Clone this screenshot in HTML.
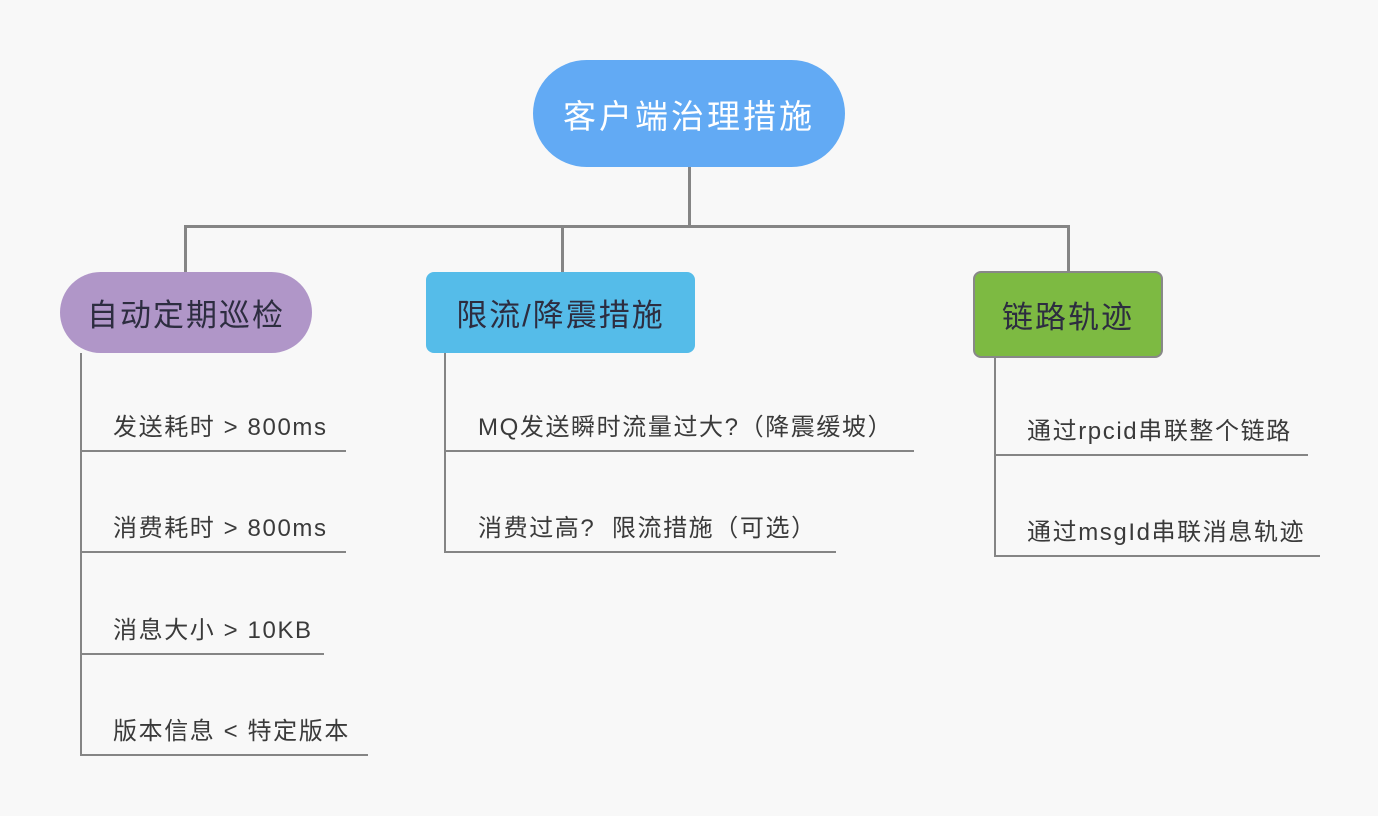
<!DOCTYPE html>
<html><head><meta charset="utf-8"><style>
body{margin:0;width:1378px;height:816px;background:#f8f8f8;position:relative;overflow:hidden;font-family:"Liberation Sans","Noto Sans CJK SC",sans-serif}
div{position:absolute;box-sizing:border-box}
.l{background:#858585}
.n{display:flex;align-items:center;justify-content:center;color:#2d2d40;font-size:31px;letter-spacing:2px}
.t{font-size:24px;letter-spacing:1.6px;color:#3a3a3a;white-space:nowrap;line-height:30px}
</style></head><body>
<div class="n" style="left:533px;top:60px;width:312px;height:107px;border-radius:54px;background:#62aaf4;color:#fff;font-size:33px;letter-spacing:3px">客户端治理措施</div>
<div class="l" style="left:688px;top:167px;width:3px;height:60px"></div>
<div class="l" style="left:184px;top:225px;width:886px;height:3px"></div>
<div class="l" style="left:184px;top:225px;width:3px;height:48px"></div>
<div class="l" style="left:561px;top:225px;width:3px;height:48px"></div>
<div class="l" style="left:1067px;top:225px;width:3px;height:48px"></div>

<div class="n" style="left:60px;top:272px;width:252px;height:81px;border-radius:41px;background:#b096c8">自动定期巡检</div>
<div class="n" style="left:426px;top:272px;width:269px;height:81px;border-radius:8px;background:#55bce9">限流/降震措施</div>
<div class="n" style="left:973px;top:271px;width:190px;height:87px;border-radius:8px;background:#7dba42;border:2px solid #888">链路轨迹</div>

<div class="l" style="left:80px;top:353px;width:2px;height:403px"></div>
<div class="l" style="left:80px;top:450px;width:266px;height:2px"></div>
<div class="l" style="left:80px;top:551px;width:266px;height:2px"></div>
<div class="l" style="left:80px;top:653px;width:244px;height:2px"></div>
<div class="l" style="left:80px;top:754px;width:288px;height:2px"></div>
<div class="t" style="left:113px;top:413px">发送耗时 &gt; 800ms</div>
<div class="t" style="left:113px;top:514px">消费耗时 &gt; 800ms</div>
<div class="t" style="left:113px;top:616px">消息大小 &gt; 10KB</div>
<div class="t" style="left:113px;top:717px">版本信息 &lt; 特定版本</div>

<div class="l" style="left:444px;top:353px;width:2px;height:200px"></div>
<div class="l" style="left:444px;top:450px;width:470px;height:2px"></div>
<div class="l" style="left:444px;top:551px;width:392px;height:2px"></div>
<div class="t" style="left:478px;top:413px">MQ发送瞬时流量过大?（降震缓坡）</div>
<div class="t" style="left:478px;top:514px">消费过高?&nbsp; 限流措施（可选）</div>

<div class="l" style="left:994px;top:358px;width:2px;height:199px"></div>
<div class="l" style="left:994px;top:454px;width:314px;height:2px"></div>
<div class="l" style="left:994px;top:555px;width:326px;height:2px"></div>
<div class="t" style="left:1027px;top:417px">通过rpcid串联整个链路</div>
<div class="t" style="left:1027px;top:518px">通过msgId串联消息轨迹</div>
</body></html>
